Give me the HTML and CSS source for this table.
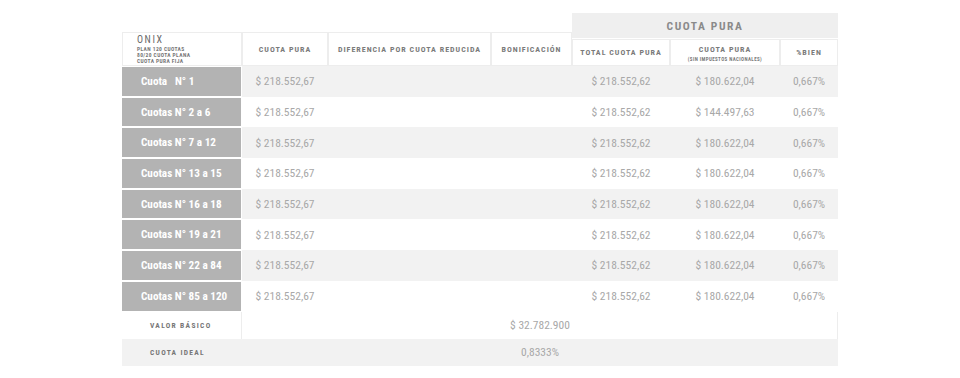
FILE: index.html
```html
<!DOCTYPE html>
<html lang="es">
<head>
<meta charset="utf-8">
<title>Onix - Cuota pura</title>
<link rel="stylesheet" href="styles.css">
</head>
<body>
<div class="sheet">
  <div class="grid head">
    <div class="hcell model">
      <span class="model-name">ONIX</span>
      <span class="model-line">PLAN 120 CUOTAS</span>
      <span class="model-line">80/20 CUOTA PLANA</span>
      <span class="model-line">CUOTA PURA FIJA</span>
    </div>
    <div class="hcell">CUOTA PURA</div>
    <div class="hcell">DIFERENCIA POR CUOTA REDUCIDA</div>
    <div class="hcell">BONIFICACIÓN</div>
    <div class="hgroup">
      <div class="hgroup-title">CUOTA PURA</div>
      <div class="hsub">
        <div class="hcell">TOTAL CUOTA PURA</div>
        <div class="hcell stack"><span>CUOTA PURA</span><small>(SIN IMPUESTOS NACIONALES)</small></div>
        <div class="hcell">%BIEN</div>
      </div>
    </div>
  </div>

  <div class="grid row alt">
    <div class="label">Cuota&nbsp;&nbsp;&nbsp;N°&nbsp;1</div>
    <div class="val">$ 218.552,67</div><div class="val"></div><div class="val"></div>
    <div class="val">$ 218.552,62</div><div class="val">$ 180.622,04</div><div class="val">0,667%</div>
  </div>
  <div class="grid row">
    <div class="label">Cuotas N° 2 a 6</div>
    <div class="val">$ 218.552,67</div><div class="val"></div><div class="val"></div>
    <div class="val">$ 218.552,62</div><div class="val">$ 144.497,63</div><div class="val">0,667%</div>
  </div>
  <div class="grid row alt">
    <div class="label">Cuotas N° 7 a 12</div>
    <div class="val">$ 218.552,67</div><div class="val"></div><div class="val"></div>
    <div class="val">$ 218.552,62</div><div class="val">$ 180.622,04</div><div class="val">0,667%</div>
  </div>
  <div class="grid row">
    <div class="label">Cuotas N° 13 a 15</div>
    <div class="val">$ 218.552,67</div><div class="val"></div><div class="val"></div>
    <div class="val">$ 218.552,62</div><div class="val">$ 180.622,04</div><div class="val">0,667%</div>
  </div>
  <div class="grid row alt">
    <div class="label">Cuotas N° 16 a 18</div>
    <div class="val">$ 218.552,67</div><div class="val"></div><div class="val"></div>
    <div class="val">$ 218.552,62</div><div class="val">$ 180.622,04</div><div class="val">0,667%</div>
  </div>
  <div class="grid row">
    <div class="label">Cuotas N° 19 a 21</div>
    <div class="val">$ 218.552,67</div><div class="val"></div><div class="val"></div>
    <div class="val">$ 218.552,62</div><div class="val">$ 180.622,04</div><div class="val">0,667%</div>
  </div>
  <div class="grid row alt">
    <div class="label">Cuotas N° 22 a 84</div>
    <div class="val">$ 218.552,67</div><div class="val"></div><div class="val"></div>
    <div class="val">$ 218.552,62</div><div class="val">$ 180.622,04</div><div class="val">0,667%</div>
  </div>
  <div class="grid row">
    <div class="label">Cuotas N° 85 a 120</div>
    <div class="val">$ 218.552,67</div><div class="val"></div><div class="val"></div>
    <div class="val">$ 218.552,62</div><div class="val">$ 180.622,04</div><div class="val">0,667%</div>
  </div>

  <div class="foot basic">
    <div class="foot-label">VALOR BÁSICO</div>
    <div class="foot-val">$ 32.782.900</div>
  </div>
  <div class="foot ideal">
    <div class="foot-label">CUOTA IDEAL</div>
    <div class="foot-val">0,8333%</div>
  </div>
</div>
</body>
</html>
```
FILE: styles.css
```css
* { box-sizing: border-box; margin: 0; padding: 0; }

body {
  background: #fff;
  font-family: "Liberation Sans Narrow", "Roboto Condensed", "DejaVu Sans Condensed", Roboto, sans-serif;
}

.sheet {
  width: 716px;
  margin: 13px auto 0;
}

.grid {
  display: grid;
  grid-template-columns: 120px 86px 163px 81px 98px 110px 58px;
}

/* header */
.head { align-items: end; }

.hcell {
  height: 34px;
  background: #fff;
  border: 1px solid #ededed;
  display: flex;
  align-items: center;
  justify-content: center;
  font-weight: 700;
  font-size: 8px;
  letter-spacing: 1px;
  color: #7a7a7a;
  white-space: nowrap;
}

.model {
  flex-direction: column;
  align-items: flex-start;
  justify-content: center;
  padding-left: 14px;
}

.model-name {
  font-size: 10px;
  font-weight: 400;
  letter-spacing: 1.6px;
  color: #6a6a6a;
  line-height: 10px;
  margin-bottom: 1px;
}

.model-line {
  font-size: 5.5px;
  letter-spacing: 0.4px;
  line-height: 6px;
  color: #777;
}

.hgroup {
  grid-column: 5 / span 3;
  display: flex;
  flex-direction: column;
}

.hgroup-title {
  height: 25px;
  margin-bottom: 1px;
  background: #efefef;
  display: flex;
  align-items: center;
  justify-content: center;
  font-size: 11.5px;
  font-weight: 700;
  letter-spacing: 1.6px;
  color: #8a8a8a;
}

.hsub {
  display: grid;
  grid-template-columns: 98px 110px 58px;
}

.hsub .hcell { height: 27px; }

.stack {
  flex-direction: column;
  line-height: 10px;
  padding-top: 3px;
}

.stack small {
  font-size: 5px;
  letter-spacing: 0.4px;
  line-height: 8px;
}

/* body rows */
.row { height: 30.7px; }
.row.alt { background: #f2f2f2; }

.label {
  background: #b3b3b3;
  border: solid #fff;
  border-width: 1px 1px 1px 0;
  display: flex;
  align-items: center;
  padding-left: 19px;
  color: #fff;
  font-weight: 700;
  font-size: 11.2px;
  white-space: nowrap;
}

.val {
  display: flex;
  align-items: center;
  justify-content: center;
  font-size: 11.5px;
  color: #a8a8a8;
  white-space: nowrap;
}

/* footer rows */
.foot {
  display: grid;
  grid-template-columns: 120px 1fr;
  height: 27px;
}

.foot.basic {
  background: #fff;
  box-shadow: inset -1px 0 0 #ededed;
}

.foot.basic .foot-label { box-shadow: inset -1px 0 0 #ededed; }

.foot.ideal { background: #f2f2f2; }

.foot-label {
  display: flex;
  align-items: center;
  padding-left: 28px;
  font-size: 7.5px;
  font-weight: 700;
  letter-spacing: 1.3px;
  color: #777;
}

.foot-val {
  display: flex;
  align-items: center;
  justify-content: center;
  font-size: 11.5px;
  color: #a8a8a8;
}
```
